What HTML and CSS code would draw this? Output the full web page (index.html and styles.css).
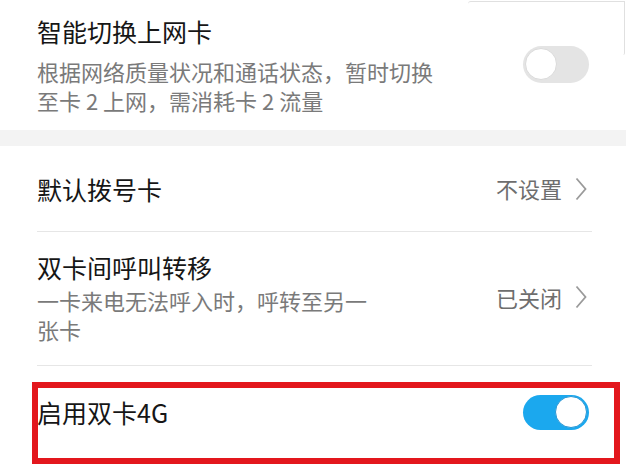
FILE: index.html
```html
<!DOCTYPE html>
<html lang="zh-CN">
<head>
<meta charset="utf-8">
<title>双卡设置</title>
<link rel="stylesheet" href="styles.css">
</head>
<body>
<div class="screen">
  <div class="ghost-frame"></div>

  <section class="group">
    <div class="row row-smart">
      <div class="text">
        <div class="title">智能切换上网卡</div>
        <div class="desc">根据网络质量状况和通话状态，暂时切换<br>至卡 2 上网，需消耗卡 2 流量</div>
      </div>
      <span class="switch"><span class="knob"></span></span>
    </div>
  </section>

  <div class="band"></div>

  <section class="group">
    <div class="row row-dial">
      <div class="text">
        <div class="title">默认拨号卡</div>
      </div>
      <div class="value">
        <span>不设置</span>
        <svg class="chevron" width="12" height="24" viewBox="0 0 12 24"><polyline points="1.5,1.5 10.5,12 1.5,22.5" fill="none" stroke="#9a9a9a" stroke-width="1.8"/></svg>
      </div>
    </div>
    <div class="divider"></div>

    <div class="row row-forward">
      <div class="text">
        <div class="title">双卡间呼叫转移</div>
        <div class="desc">一卡来电无法呼入时，呼转至另一<br>张卡</div>
      </div>
      <div class="value">
        <span>已关闭</span>
        <svg class="chevron" width="12" height="24" viewBox="0 0 12 24"><polyline points="1.5,1.5 10.5,12 1.5,22.5" fill="none" stroke="#9a9a9a" stroke-width="1.8"/></svg>
      </div>
    </div>
    <div class="divider"></div>

    <div class="row row-4g">
      <div class="text">
        <div class="title">启用双卡4G</div>
      </div>
      <span class="switch on"><span class="knob"></span></span>
      <div class="highlight"></div>
    </div>
  </section>
</div>
</body>
</html>
```
FILE: styles.css
```css
html, body {
  margin: 0;
  padding: 0;
  background: #ffffff;
}

body {
  font-family: "Noto Sans CJK SC", "Noto Sans", sans-serif;
  color: #161616;
}

.screen {
  position: relative;
  width: 626px;
  height: 468px;
  overflow: hidden;
  background: #ffffff;
}

.ghost-frame {
  position: absolute;
  left: 468px;
  top: 1px;
  width: 156px;
  height: 53px;
  border-top: 1px solid #e0e0e0;
  border-right: 1px solid #e0e0e0;
  border-radius: 3px 0 2px 0;
}

.row {
  display: flex;
  align-items: center;
  justify-content: space-between;
  padding: 0 37px 0 37px;
}

.text {
  display: flex;
  flex-direction: column;
}

.title {
  font-size: 25px;
  line-height: 34px;
  color: #161616;
  white-space: nowrap;
}

.desc {
  font-size: 22px;
  line-height: 29px;
  color: #7a7a7a;
  white-space: nowrap;
}

.row-smart {
  padding-top: 13px;
  padding-bottom: 14px;
  height: 103px;
}

.row-smart .desc {
  margin-top: 9px;
}

.band {
  height: 16px;
  background: #f3f3f3;
}

.row-dial {
  height: 85px;
}

.row-forward {
  height: 133px;
  padding-bottom: 3px;
  box-sizing: border-box;
}

.row-forward .desc {
  margin-top: 2px;
}

.row-4g {
  position: relative;
  height: 90px;
  padding-bottom: 45px;
  box-sizing: border-box;
  padding-top: 46px;
}

.divider {
  height: 1px;
  background: #e6e6e6;
  margin: 0 34px 0 37px;
}

.value {
  display: flex;
  align-items: center;
  gap: 13px;
  font-size: 22px;
  line-height: 29px;
  color: #6e6e6e;
  margin-right: 2px;
}

.chevron {
  display: block;
}

.switch {
  position: relative;
  display: block;
  width: 66px;
  height: 37px;
  border-radius: 19px;
  background: #e4e4e4;
  flex: none;
}

.switch .knob {
  position: absolute;
  top: 2px;
  left: 2px;
  width: 30px;
  height: 30px;
  border-radius: 50%;
  background: #ffffff;
  border: 1.5px solid #dadada;
}

.switch.on {
  background: #1ba8ee;
  height: 35px;
}

.switch.on .knob {
  left: auto;
  right: 2px;
  top: 1.5px;
  border-color: #2896d4;
}

.highlight {
  position: absolute;
  left: 32px;
  top: 16px;
  width: 588px;
  height: 82px;
  box-sizing: border-box;
  border: 6px solid #e3171d;
  pointer-events: none;
}
```
